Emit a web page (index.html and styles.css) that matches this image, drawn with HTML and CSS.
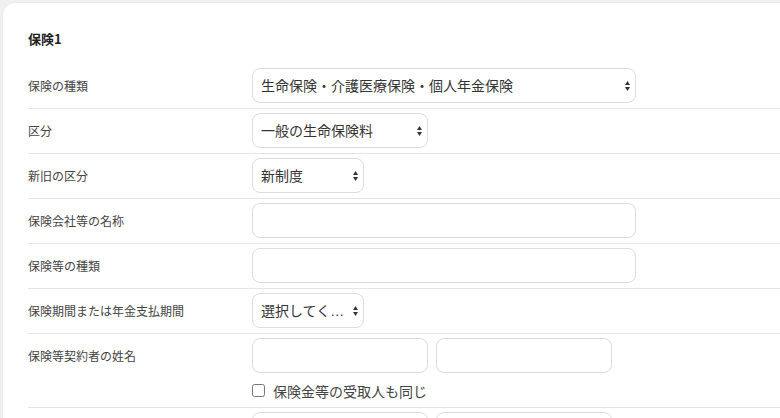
FILE: index.html
```html
<!DOCTYPE html>
<html>
<head>
  <title>保険</title>
  <link rel="stylesheet" href="styles.css">
</head>
<body>
  <div class="card">
    <h2 class="card-title">保険1</h2>

    <div class="form-row">
      <label class="row-label">保険の種類</label>
      <div class="row-fields">
        <div class="select-wrap w-full">
          <select class="control">
            <option>生命保険・介護医療保険・個人年金保険</option>
          </select>
          <svg class="select-arrow" width="5" height="10" viewBox="0 0 5 10"><path d="M2.5 0 L5 4 L0 4 Z M0 6 L5 6 L2.5 10 Z" fill="#333"/></svg>
        </div>
      </div>
    </div>

    <div class="form-row">
      <label class="row-label">区分</label>
      <div class="row-fields">
        <div class="select-wrap w-half">
          <select class="control">
            <option>一般の生命保険料</option>
          </select>
          <svg class="select-arrow" width="5" height="10" viewBox="0 0 5 10"><path d="M2.5 0 L5 4 L0 4 Z M0 6 L5 6 L2.5 10 Z" fill="#333"/></svg>
        </div>
      </div>
    </div>

    <div class="form-row">
      <label class="row-label">新旧の区分</label>
      <div class="row-fields">
        <div class="select-wrap w-small">
          <select class="control">
            <option>新制度</option>
          </select>
          <svg class="select-arrow" width="5" height="10" viewBox="0 0 5 10"><path d="M2.5 0 L5 4 L0 4 Z M0 6 L5 6 L2.5 10 Z" fill="#333"/></svg>
        </div>
      </div>
    </div>

    <div class="form-row">
      <label class="row-label">保険会社等の名称</label>
      <div class="row-fields">
        <input type="text" class="control w-full">
      </div>
    </div>

    <div class="form-row">
      <label class="row-label">保険等の種類</label>
      <div class="row-fields">
        <input type="text" class="control w-full">
      </div>
    </div>

    <div class="form-row">
      <label class="row-label">保険期間または年金支払期間</label>
      <div class="row-fields">
        <div class="select-wrap w-small">
          <select class="control">
            <option>選択してください</option>
          </select>
          <svg class="select-arrow" width="5" height="10" viewBox="0 0 5 10"><path d="M2.5 0 L5 4 L0 4 Z M0 6 L5 6 L2.5 10 Z" fill="#333"/></svg>
        </div>
      </div>
    </div>

    <div class="form-row">
      <label class="row-label">保険等契約者の姓名</label>
      <div class="row-fields">
        <div class="name-pair">
          <input type="text" class="control w-half">
          <input type="text" class="control w-half">
        </div>
        <label class="check-line">
          <input type="checkbox" class="check-box">
          <span>保険金等の受取人も同じ</span>
        </label>
      </div>
    </div>

    <div class="form-row">
      <label class="row-label"></label>
      <div class="row-fields">
        <div class="name-pair">
          <input type="text" class="control w-half">
          <input type="text" class="control w-half">
        </div>
      </div>
    </div>
  </div>
</body>
</html>
```

FILE: styles.css
```css
html, body {
  margin: 0;
  padding: 0;
  overflow: hidden;
}

body {
  font-family: "Noto Sans CJK JP", "Noto Sans", sans-serif;
  background-color: #f1f1f1;
  color: #333;
  padding: 3px 0 0 3px;
}

.card {
  width: 900px;
  background-color: #fff;
  border-radius: 12px;
  box-shadow: 0 0 3px rgba(0, 0, 0, 0.06);
  padding: 26px 0 0 25px;
}

.card-title {
  font-size: 13px;
  font-weight: bold;
  line-height: 20px;
  margin: 0 0 15px 0;
  color: #222;
}

.form-row {
  display: flex;
  align-items: flex-start;
  padding: 4px 0 5px 0;
  border-bottom: 1px solid #e4e4e4;
}

.row-label {
  width: 224px;
  flex-shrink: 0;
  font-size: 12px;
  line-height: 35px;
  color: #444;
}

.row-fields {
  display: flex;
  flex-direction: column;
}

.control {
  box-sizing: border-box;
  height: 35px;
  border: 1px solid #dcdcdc;
  border-radius: 8px;
  background-color: #fff;
  font-family: "Liberation Sans", "Noto Sans CJK JP", sans-serif;
  font-size: 14px;
  color: #333;
  padding: 0 8px;
  outline: none;
}

select.control {
  -webkit-appearance: none;
  appearance: none;
  width: 100%;
  padding-right: 13px;
  text-overflow: ellipsis;
  white-space: nowrap;
  overflow: hidden;
}

.select-wrap {
  position: relative;
}

.select-arrow {
  position: absolute;
  right: 6px;
  top: 13px;
  pointer-events: none;
}

.w-full {
  width: 384px;
}

.w-half {
  width: 176px;
}

.w-small {
  width: 112px;
}

.name-pair {
  display: flex;
  gap: 8px;
}

.check-line {
  display: flex;
  align-items: center;
  gap: 8px;
  margin-top: 6px;
  height: 23px;
  font-size: 14px;
  color: #444;
}

.check-box {
  margin: 0;
  width: 13px;
  height: 13px;
}
```
